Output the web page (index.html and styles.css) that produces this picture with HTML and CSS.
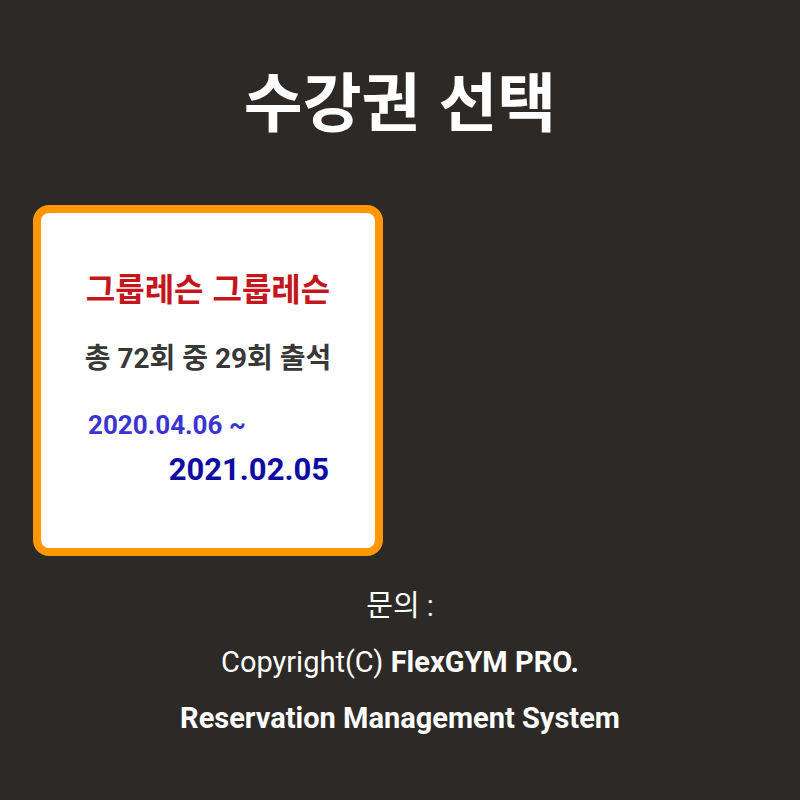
FILE: index.html
```html
<!DOCTYPE html>
<html lang="ko">
<head>
<meta charset="utf-8">
<link rel="stylesheet" href="styles.css">
</head>
<body>
<div class="page">
  <h1 class="title">수강권 선택</h1>
  <div class="cards">
    <div class="card">
      <div class="card-name">그룹레슨 그룹레슨</div>
      <div class="card-count">총 72회 중 29회 출석</div>
      <div class="card-from">2020.04.06 ~</div>
      <div class="card-to">2021.02.05</div>
    </div>
  </div>
  <footer class="footer">
    <p class="footer-line">문의 :</p>
    <p class="footer-line">Copyright(C) <b>FlexGYM PRO.</b></p>
    <p class="footer-line footer-bold">Reservation Management System</p>
  </footer>
</div>
</body>
</html>
```
FILE: styles.css
```css
html, body {
  margin: 0;
  padding: 0;
  background: #2c2927;
}
body {
  font-family: Roboto, "Noto Sans CJK KR", sans-serif;
  color: #ffffff;
}
.page {
  width: 800px;
  height: 800px;
  display: flex;
  flex-direction: column;
  align-items: stretch;
}
.title {
  margin: 60px 0 0;
  font-size: 64px;
  line-height: 76px;
  font-weight: 700;
  text-align: center;
  font-family: "Noto Sans CJK KR", sans-serif;
}
.cards {
  display: grid;
  grid-template-columns: 350px;
  padding: 69px 0 0 33px;
}
.card {
  box-sizing: border-box;
  height: 351px;
  background: #ffffff;
  border: 8px solid #ff9800;
  border-radius: 16px;
  padding: 52px 0 0 0;
  display: flex;
  flex-direction: column;
}
.card-name {
  color: #c4161c;
  font-size: 32px;
  line-height: 44px;
  font-weight: 700;
  text-align: center;
  font-family: "Noto Sans CJK KR", sans-serif;
}
.card-count {
  margin-top: 30px;
  color: #383838;
  font-size: 28px;
  line-height: 40px;
  font-weight: 700;
  text-align: center;
}
.card-from {
  margin-top: 29px;
  color: #3a35d2;
  font-size: 26px;
  line-height: 34px;
  font-weight: 700;
  text-align: left;
  padding-left: 47px;
}
.card-to {
  margin-top: 9px;
  color: #0e0ca2;
  font-size: 31px;
  line-height: 38px;
  font-weight: 700;
  text-align: right;
  padding-right: 46px;
}
.footer {
  margin-top: 22px;
  text-align: center;
}
.footer-line {
  margin: 0;
  font-size: 29px;
  line-height: 56px;
}
.footer-line b,
.footer-bold {
  font-weight: 700;
}
```
